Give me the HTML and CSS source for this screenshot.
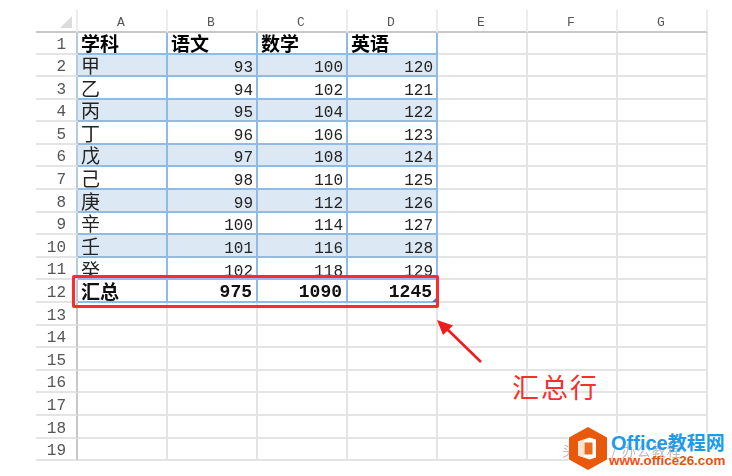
FILE: index.html
```html
<!DOCTYPE html>
<html lang="zh">
<head>
<meta charset="utf-8">
<title>汇总行</title>
<link rel="stylesheet" href="styles.css">
</head>
<body>
<div class="sheet">
  <div class="corner"><span class="tri"></span></div><div class="ch">A</div><div class="ch">B</div><div class="ch">C</div><div class="ch">D</div><div class="ch">E</div><div class="ch">F</div><div class="ch">G</div>

  <div class="rh first">1</div><div class="c head txt">学科</div><div class="c head txt">语文</div><div class="c head txt">数学</div><div class="c head txt last">英语</div><div class="e"></div><div class="e"></div><div class="e"></div>

  <div class="rh in">2</div><div class="c band txt">甲</div><div class="c band num">93</div><div class="c band num">100</div><div class="c band num last">120</div><div class="e"></div><div class="e"></div><div class="e"></div>
  <div class="rh in">3</div><div class="c txt">乙</div><div class="c num">94</div><div class="c num">102</div><div class="c num last">121</div><div class="e"></div><div class="e"></div><div class="e"></div>
  <div class="rh in">4</div><div class="c band txt">丙</div><div class="c band num">95</div><div class="c band num">104</div><div class="c band num last">122</div><div class="e"></div><div class="e"></div><div class="e"></div>
  <div class="rh in">5</div><div class="c txt">丁</div><div class="c num">96</div><div class="c num">106</div><div class="c num last">123</div><div class="e"></div><div class="e"></div><div class="e"></div>
  <div class="rh in">6</div><div class="c band txt">戊</div><div class="c band num">97</div><div class="c band num">108</div><div class="c band num last">124</div><div class="e"></div><div class="e"></div><div class="e"></div>
  <div class="rh in">7</div><div class="c txt">己</div><div class="c num">98</div><div class="c num">110</div><div class="c num last">125</div><div class="e"></div><div class="e"></div><div class="e"></div>
  <div class="rh in">8</div><div class="c band txt">庚</div><div class="c band num">99</div><div class="c band num">112</div><div class="c band num last">126</div><div class="e"></div><div class="e"></div><div class="e"></div>
  <div class="rh in">9</div><div class="c txt">辛</div><div class="c num">100</div><div class="c num">114</div><div class="c num last">127</div><div class="e"></div><div class="e"></div><div class="e"></div>
  <div class="rh in">10</div><div class="c band txt">壬</div><div class="c band num">101</div><div class="c band num">116</div><div class="c band num last">128</div><div class="e"></div><div class="e"></div><div class="e"></div>
  <div class="rh in">11</div><div class="c txt clip"><span>癸</span></div><div class="c num clip"><span>102</span></div><div class="c num clip"><span>118</span></div><div class="c num clip last"><span>129</span></div><div class="e"></div><div class="e"></div><div class="e"></div>
  <div class="rh in">12</div><div class="c head txt total">汇总</div><div class="c num total">975</div><div class="c num total">1090</div><div class="c num total last">1245<i class="handle"></i></div><div class="e"></div><div class="e"></div><div class="e"></div>

  <div class="rh">13</div><div class="e"></div><div class="e"></div><div class="e"></div><div class="e"></div><div class="e"></div><div class="e"></div><div class="e"></div>
  <div class="rh">14</div><div class="e"></div><div class="e"></div><div class="e"></div><div class="e"></div><div class="e"></div><div class="e"></div><div class="e"></div>
  <div class="rh">15</div><div class="e"></div><div class="e"></div><div class="e"></div><div class="e"></div><div class="e"></div><div class="e"></div><div class="e"></div>
  <div class="rh">16</div><div class="e"></div><div class="e"></div><div class="e"></div><div class="e"></div><div class="e"></div><div class="e"></div><div class="e"></div>
  <div class="rh">17</div><div class="e"></div><div class="e"></div><div class="e"></div><div class="e"></div><div class="e"></div><div class="e"></div><div class="e"></div>
  <div class="rh">18</div><div class="e"></div><div class="e"></div><div class="e"></div><div class="e"></div><div class="e"></div><div class="e"></div><div class="e"></div>
  <div class="rh">19</div><div class="e"></div><div class="e"></div><div class="e"></div><div class="e"></div><div class="e"></div><div class="e"></div><div class="e"></div>
</div>

<div class="redbox"></div>
<svg class="arrow" width="60" height="56" viewBox="0 0 60 56" aria-hidden="true">
  <path d="M47 46 L12 12" fill="none" stroke="#f01c1c" stroke-width="2.6"/>
  <path d="M3 4 L19 9.5 L9 19 Z" fill="#f01c1c"/>
</svg>
<div class="note">汇总行</div>

<div class="stamp">
  <div class="mark">头条号 / 办公教程</div>
  <div class="logo">
    <svg class="hex" width="38" height="43" viewBox="0 0 38 43" aria-hidden="true">
      <path d="M19 0 L38 10.5 V32.5 L19 43 L0 32.5 V10.5 Z" fill="#e8590c"/>
      <path d="M9 14.5 L20.5 10.5 L27 12.5 V30.5 L20.5 32.5 L9 28.5 Z" fill="#fff"/>
      <path d="M9 14.5 L15 12.5 V30.5 L9 28.5 Z" fill="#fbe3d3"/>
      <path d="M15.5 15.5 H23.5 V27.5 H15.5 Z" fill="#ea6a1e"/>
    </svg>
    <div class="brand">
      <div class="name">Office<span class="cn">教程网</span></div>
      <div class="url">www.office26.com</div>
    </div>
  </div>
</div>
</body>
</html>
```

FILE: styles.css
```css
* { box-sizing: border-box; }
html, body { margin: 0; height: 100%; background: #fff; overflow: hidden; }
body { position: relative; font-family: "Liberation Mono", "Noto Sans CJK SC", monospace; }

.sheet {
  display: grid;
  grid-template-columns: 42px repeat(7, 90px);
  grid-template-rows: 22.5px 22px repeat(18, 22.6px);
  width: 672px;
  margin: 10px 0 0 36px;
  filter: blur(0.35px);
  font-size: 16px;
  color: #222;
}

.corner, .ch { border-bottom: 2px solid #c8c8c8; border-right: 2px solid #ececec; }
.corner { position: relative; }
.tri {
  position: absolute; right: 4px; bottom: 3px;
  width: 0; height: 0;
  border-left: 12px solid transparent;
  border-bottom: 12px solid #dcdcdc;
}
.ch {
  display: flex; align-items: center; justify-content: center;
  font-size: 13px; color: #555; padding: 4px 2px 0 0;
}

.rh {
  display: flex; align-items: flex-end; justify-content: flex-end;
  padding: 0 10px 1px 0;
  font-size: 16px; line-height: 14px; color: #555;
  border-bottom: 2px solid #e4e4e4; border-right: 2px solid #c8c8c8;
}
.rh.first, .rh.in { border-right-color: #b4cce2; }

.e { border-right: 2px solid #e4e4e4; border-bottom: 2px solid #e4e4e4; }

.c {
  display: flex; align-items: flex-end;
  border-right: 2px solid #8fbce6; border-bottom: 2px solid #8fbce6;
  line-height: 14px;
}
.band { background: #dce9f5; }
.txt {
  padding-left: 3px;
  font-family: "Noto Sans CJK SC", sans-serif; font-size: 19px; line-height: 20px;
  color: #222;
}
.num { justify-content: flex-end; padding-right: 3px; }
.head { font-weight: 700; color: #000; }
.total { font-weight: 700; color: #111; font-size: 18px; line-height: 17px; position: relative; }
.total.num { padding-right: 4px; }
.total.txt { font-size: 19px; line-height: 20px; }
.clip { overflow: hidden; }
.clip span { position: relative; top: 1px; }
.clip.txt span { top: 2px; }
.handle {
  position: absolute; right: -1px; bottom: -1px;
  width: 0; height: 0;
  border-left: 5px solid transparent;
  border-bottom: 5px solid #4a6cc4;
}

.redbox {
  position: absolute; left: 72px; top: 275px;
  width: 367px; height: 33px;
  border: 3px solid #ff2a2a; border-radius: 2px;
}
.arrow { position: absolute; left: 434px; top: 316px; }
.note {
  position: absolute; left: 512px; top: 370px;
  font-family: "Noto Sans CJK SC", sans-serif; font-size: 27px; line-height: 34px;
  letter-spacing: 2px; color: #f43030;
}

.stamp { position: absolute; left: 568px; top: 433px; right: 0; bottom: 0; background: #fff; }
.mark {
  position: absolute; left: -6px; top: 9px;
  font-family: "Noto Sans CJK SC", sans-serif; font-size: 14px; line-height: 16px;
  letter-spacing: 1px; color: #bdbdbd; filter: blur(0.5px); white-space: nowrap;
}
.logo { position: absolute; left: 1px; top: -6px; display: flex; gap: 4px; }
.hex { display: block; flex: none; }
.brand { display: flex; flex-direction: column; margin-top: 4px; }
.name {
  font-family: "Liberation Sans", "Noto Sans CJK SC", sans-serif;
  font-size: 20px; line-height: 22px; font-weight: 700; color: #1e9be8; white-space: nowrap;
}
.cn { font-size: 19px; font-family: "Noto Sans CJK SC", sans-serif; }
.url {
  font-family: "Liberation Sans", sans-serif;
  font-size: 13.4px; line-height: 13px; font-weight: 700; color: #e8520e;
  margin-left: -2px; white-space: nowrap;
}
```
